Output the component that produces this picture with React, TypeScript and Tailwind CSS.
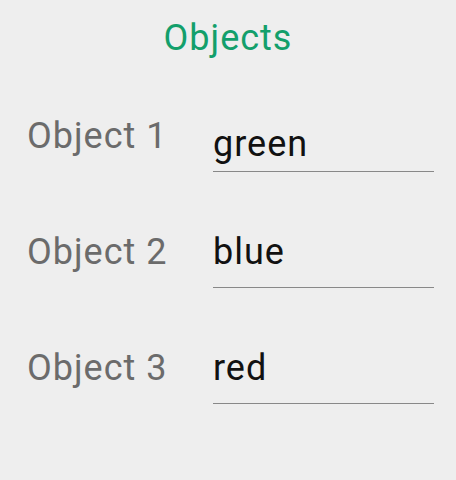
import React from "react";

const rows = [
  { label: "Object 1", value: "green" },
  { label: "Object 2", value: "blue" },
  { label: "Object 3", value: "red" },
];

export default function App() {
  return (
    <div className="w-[456px] h-[480px] bg-[#eeeeee] font-['Roboto',sans-serif] tracking-[1px]">
      <h1 className="pt-[18px] text-center text-[36px] leading-[40px] text-[#139f6b]">
        Objects
      </h1>
      <div className="mt-[58px] flex flex-col gap-[60px]">
        {rows.map((row, i) => (
          <div key={row.label} className="flex items-start">
            <div className="w-[213px] pl-[27px] text-[36px] leading-[40px] text-[#6b6b6b]">
              {row.label}
            </div>
            <div
              className={
                i === 0
                  ? "w-[221px] h-[56px] pt-[8px] border-b border-[#888888] text-[36px] leading-[40px] text-[#111111]"
                  : "w-[221px] h-[56px] border-b border-[#888888] text-[36px] leading-[40px] text-[#111111]"
              }
            >
              {row.value}
            </div>
          </div>
        ))}
      </div>
    </div>
  );
}
